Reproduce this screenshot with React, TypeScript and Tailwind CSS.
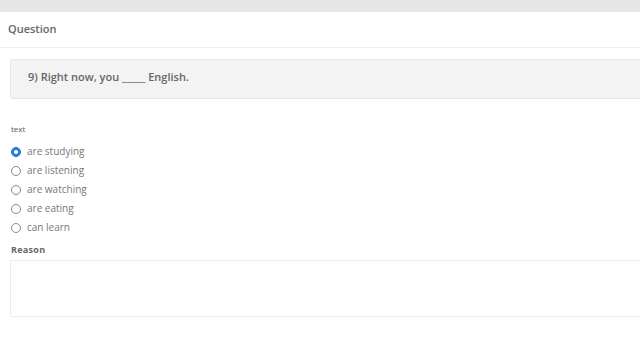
const options = ["are studying", "are listening", "are watching", "are eating", "can learn"];

const App = () => {
  return (
    <div className="w-[640px] h-[360px] bg-white overflow-hidden" style={{ fontFamily: '"Open Sans", sans-serif' }}>
      <div className="h-[12px] bg-[#e6e6e6]" />
      <div className="h-[36px] flex items-center pl-[8px] border-b border-[#efefef]">
        <span className="text-[11px] font-semibold text-[#666]">Question</span>
      </div>
      <div className="ml-[10px] mt-[11px] h-[40px] bg-[#f3f3f3] border border-[#e8e8e8] rounded-l-[3px] border-r-0 flex items-center pl-[17px] pb-[4px]">
        <span className="text-[11px] font-semibold text-[#666]">9) Right now, you _____ English.</span>
      </div>
      <div className="pl-[11px] mt-[24px]">
        <div className="text-[8px] text-[#555] leading-[12px]">text</div>
        <div className="mt-[7px] flex flex-col">
          {options.map((o, i) => (
            <label key={o} className="h-[19px] flex items-center gap-[6px]">
              {i === 0 ? (
                <span className="w-[10px] h-[10px] rounded-full bg-[#2f7fe0] border border-[#1f6fd0] flex items-center justify-center">
                  <span className="w-[4px] h-[4px] rounded-full bg-white" />
                </span>
              ) : (
                <span className="w-[10px] h-[10px] rounded-full border border-[#888] bg-white" />
              )}
              <span className="text-[10px] text-[#777]">{o}</span>
            </label>
          ))}
        </div>
        <div className="mt-[6px] text-[9px] font-bold text-[#666] tracking-[0.3px]">Reason</div>
      </div>
      <div className="ml-[10px] mt-[3px] h-[57px] border border-[#ececec] border-r-0 rounded-l-[2px] bg-white" />
    </div>
  );
};

export default App;
